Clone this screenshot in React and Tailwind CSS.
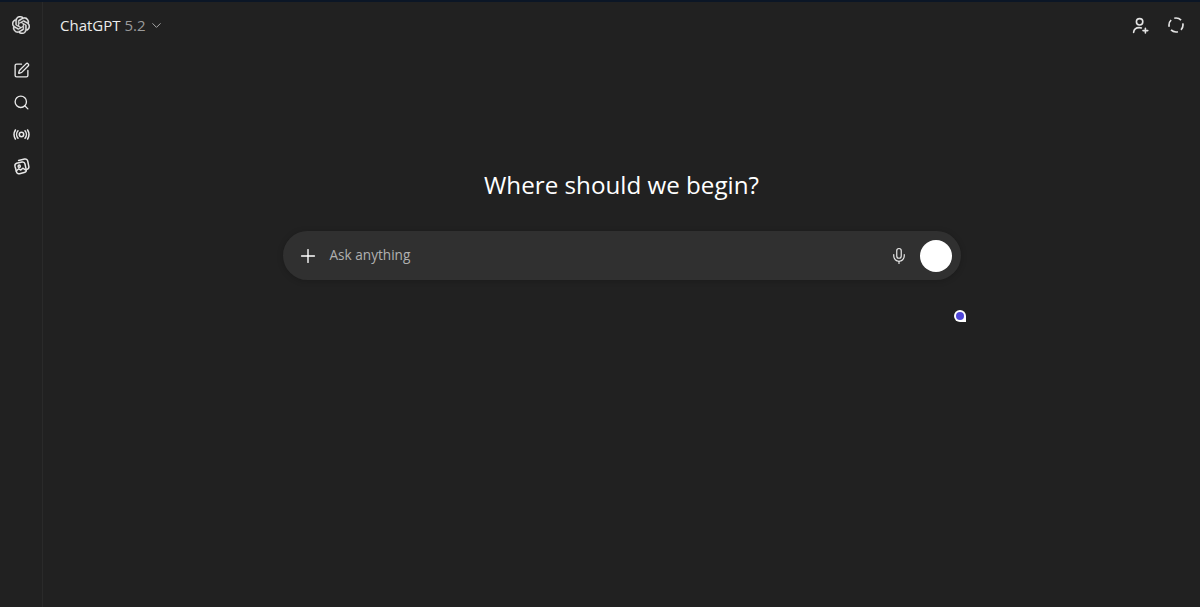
import { ChevronDown, Mic, Plus, Search, SquarePen } from 'lucide-react';
import { SiOpenai } from 'react-icons/si';

function BroadcastIcon() {
  return (
    <svg width="17" height="17" viewBox="0 0 17 17" fill="none" stroke="currentColor" strokeWidth="1.5" strokeLinecap="round">
      <circle cx="8.5" cy="8.5" r="2.2" />
      <path d="M5 4.8a5.6 5.6 0 0 0 0 7.4" />
      <path d="M12 4.8a5.6 5.6 0 0 1 0 7.4" />
      <path d="M2.4 4a8.6 8.6 0 0 0 0 9" />
      <path d="M14.6 4a8.6 8.6 0 0 1 0 9" />
    </svg>
  );
}

function GalleryIcon() {
  return (
    <svg width="17" height="17" viewBox="0 0 17 17" fill="none" stroke="currentColor" strokeWidth="1.5" strokeLinecap="round" strokeLinejoin="round">
      <path d="M3.6 5.2 9 4a2.6 2.6 0 0 1 3 2l1.2 5.6a2.6 2.6 0 0 1-2 3L6.6 15.8a2.6 2.6 0 0 1-3.1-2L2 8.2a2.6 2.6 0 0 1 1.6-3Z" />
      <path d="M5.6 2.4 11.6 1a2.6 2.6 0 0 1 3.1 2l1.1 5.4a2.6 2.6 0 0 1-1.7 3" />
      <circle cx="6.2" cy="8.2" r="1.1" />
      <path d="m3.2 13 2.6-2.2 2 1.2 2-1.8 2.6 1.6" />
    </svg>
  );
}

function AddUserIcon() {
  return (
    <svg width="17" height="17" viewBox="0 0 17 17" fill="none" stroke="currentColor" strokeWidth="1.6" strokeLinecap="round">
      <circle cx="7.6" cy="4.8" r="3.2" />
      <path d="M1.6 15.4c.4-3.4 2.8-4.8 5.6-4.8.9 0 1.6.1 2.2.4" />
      <path d="M11 13.6h4.8M13.4 11.2V16" />
    </svg>
  );
}

function DashedCircleIcon() {
  return (
    <svg width="16" height="16" viewBox="0 0 16 16" fill="none" stroke="currentColor" strokeWidth="1.7">
      <circle cx="8" cy="8" r="7" strokeDasharray="7.4 3.6" strokeDashoffset="2" />
    </svg>
  );
}

export default function App() {
  return (
    <div className="relative flex h-[607px] w-[1200px] overflow-hidden border-t-2 border-[#0b1626] bg-[#212121] font-['Open_Sans',sans-serif] text-white">
      {/* Sidebar */}
      <aside className="flex w-[43px] shrink-0 flex-col items-center border-r border-[#2a2a2a] pt-[14px] text-[#e8e8e8]">
        <SiOpenai className="h-[18px] w-[18px] stroke-[0.5px]" />
        <div className="mt-[28px] flex flex-col items-center gap-[15px]">
          <SquarePen className="h-[17px] w-[17px]" strokeWidth={1.9} />
          <Search className="h-[17px] w-[17px]" strokeWidth={1.9} />
          <BroadcastIcon />
          <GalleryIcon />
        </div>
      </aside>

      <main className="flex min-w-0 flex-1 flex-col">
        {/* Top bar */}
        <header className="flex h-[46px] items-center justify-between pl-[17px] pr-[16px]">
          <div className="flex items-center gap-[4px] text-[15px]">
            <span className="text-[#ececec]">ChatGPT</span>
            <span className="text-[#9b9b9b]">5.2</span>
            <ChevronDown className="-ml-[1px] h-[15px] w-[15px] text-[#a8a8a8]" strokeWidth={1.6} />
          </div>
          <div className="flex items-center gap-[19px] text-[#e4e4e4]">
            <AddUserIcon />
            <DashedCircleIcon />
          </div>
        </header>

        {/* Prompt */}
        <div className="flex flex-col items-center pt-[118px]">
          <h1 className="text-[24.2px] leading-[38px] font-normal">Where should we begin?</h1>
          <div className="mt-[27px] flex h-[49px] w-[678px] items-center rounded-[25px] bg-[#303030] pl-[14px] pr-[9px] shadow-[0_1px_6px_rgba(0,0,0,0.2)]">
            <Plus className="h-[22px] w-[22px] text-white" strokeWidth={1.5} />
            <span className="ml-[11px] flex-1 text-[13.6px] text-[#b0b0b0]">Ask anything</span>
            <Mic className="h-[18px] w-[18px] text-[#e8e8e8]" strokeWidth={1.6} />
            <div className="ml-[12px] h-[32px] w-[32px] rounded-full bg-white" />
          </div>
        </div>
      </main>

      {/* Floating marker */}
      <div className="absolute left-[954px] top-[308px] flex h-[12px] w-[12px] items-center justify-center rounded-full rounded-br-[3px] bg-white">
        <div className="h-[8px] w-[8px] rounded-full bg-[#4f46d8]" />
      </div>
    </div>
  );
}
